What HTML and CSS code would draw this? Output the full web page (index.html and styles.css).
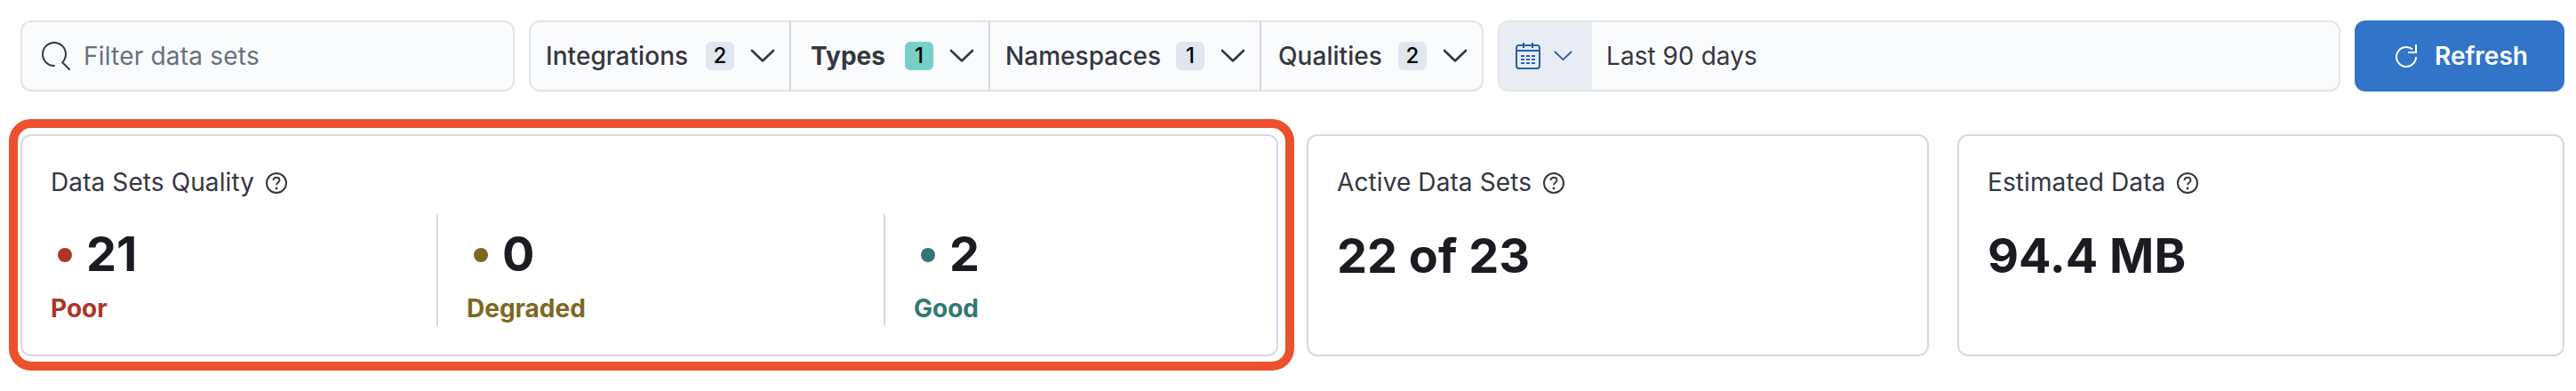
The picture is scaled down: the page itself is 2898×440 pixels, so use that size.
FILE: index.html
```html
<!DOCTYPE html>
<html lang="en">
<head>
<meta charset="utf-8">
<title>Data Set Quality</title>
<link rel="stylesheet" href="styles.css">
</head>
<body>
<svg class="sprite" aria-hidden="true">
  <symbol id="chevron" viewBox="0 0 28 16"><path d="M2 2l12 11.500L26 2" fill="none" stroke="currentColor" stroke-width="2.600" stroke-linecap="round" stroke-linejoin="round"/></symbol>
  <symbol id="help" viewBox="0 0 24 24"><circle cx="12" cy="12" r="11" fill="none" stroke="currentColor" stroke-width="2"/><path d="M8.500 9c.2-2.200 1.500-3.300 3.500-3.300s3.500 1.200 3.500 3c0 2.800-3.500 2.600-3.500 5.600" fill="none" stroke="currentColor" stroke-width="1.900"/><circle cx="12" cy="18" r="1.400" fill="currentColor"/></symbol>
</svg>
<main class="page">
  <div class="toolbar">
    <label class="search">
      <svg class="search-icon" viewBox="0 0 16 16"><path fill="currentColor" d="M11.271 11.978l3.872 3.873a.502.502 0 00.708 0 .502.502 0 000-.708l-3.565-3.564c2.380-2.747 2.267-6.923-.342-9.532-2.730-2.730-7.170-2.730-9.898 0-2.728 2.729-2.728 7.170 0 9.900a6.955 6.955 0 004.949 2.050.5.5 0 000-1 5.960 5.960 0 01-4.242-1.757 6.010 6.010 0 010-8.486 6.010 6.010 0 018.486 0 6.010 6.010 0 010 8.486.5.5 0 00.034.738z"/></svg>
      <span>Filter data sets</span>
    </label>
    <div class="filters">
      <div class="filter integrations"><span class="name">Integrations</span><span class="badge">2</span><svg class="chevron"><use href="#chevron"/></svg></div>
      <div class="filter types"><span class="name">Types</span><span class="badge active">1</span><svg class="chevron"><use href="#chevron"/></svg></div>
      <div class="filter namespaces"><span class="name">Namespaces</span><span class="badge">1</span><svg class="chevron"><use href="#chevron"/></svg></div>
      <div class="filter qualities"><span class="name">Qualities</span><span class="badge">2</span><svg class="chevron"><use href="#chevron"/></svg></div>
    </div>
    <div class="dates">
      <div class="quick">
        <svg class="calendar" viewBox="0 0 28 30"><g fill="none" stroke="currentColor" stroke-width="2"><rect x="1" y="3" width="26" height="26" rx="3"/><path d="M1 9h26M9 0v6M19 0v6"/><path d="M6 15h4M12 15h4M18 15h4M6 19h4M12 19h4M18 19h4M6 23h4M12 23h4M18 23h4"/></g></svg>
        <svg class="chevron small"><use href="#chevron"/></svg>
      </div>
      <span class="range">Last 90 days</span>
    </div>
    <button class="refresh" type="button">
      <svg class="refresh-icon" viewBox="0 0 24 26"><g fill="none" stroke="currentColor" stroke-width="2"><path d="M23 14A11 11 0 1 1 19 5.500"/><path d="M23 0v9h-9"/></g></svg>
      <span>Refresh</span>
    </button>
  </div>
  <div class="cards">
    <section class="card quality">
      <div class="title"><span>Data Sets Quality</span><svg class="help"><use href="#help"/></svg></div>
      <div class="stats">
        <div class="stat poor"><div class="count"><i class="dot"></i>21</div><div class="level">Poor</div></div>
        <div class="stat degraded"><div class="count"><i class="dot"></i>0</div><div class="level">Degraded</div></div>
        <div class="stat good"><div class="count"><i class="dot"></i>2</div><div class="level">Good</div></div>
      </div>
      <div class="highlight"></div>
    </section>
    <section class="card activity">
      <div class="title"><span>Active Data Sets</span><svg class="help"><use href="#help"/></svg></div>
      <div class="value">22 of 23</div>
    </section>
    <section class="card size">
      <div class="title"><span>Estimated Data</span><svg class="help"><use href="#help"/></svg></div>
      <div class="value">94.4 MB</div>
    </section>
  </div>
</main>
</body>
</html>
```
FILE: styles.css
```css
* { box-sizing: border-box; }

body {
  margin: 0;
  background: #fff;
  color: #343741;
  font: 400 28px/40px Inter, "Liberation Sans", sans-serif;
}

.sprite { display: none; }
svg { display: block; flex: none; }

.page {
  height: 440px;
  padding: 23px 13px 0 23px;
}

.toolbar {
  display: flex;
  gap: 16px;
  height: 80px;
}

.search, .filters, .dates {
  display: flex;
  align-items: center;
  background: #fafbfd;
  border: 2px solid #e3e4e8;
  border-radius: 12px;
}

.search {
  width: 556px;
  padding-left: 22px;
  gap: 15px;
  color: #69707d;
  letter-spacing: 0.2px;
}

.search-icon { width: 32px; height: 32px; color: #343741; }

.filters {
  width: 1074px;
  align-items: stretch;
}

.filter {
  display: flex;
  align-items: center;
  padding: 0 16px 0 17px;
  margin: -2px 0;
  font-weight: 500;
  letter-spacing: 0.05px;
  border-right: 2px solid #d5d7dc;
}

.filter .name { flex: 1; }
.integrations { width: 293px; }
.types { width: 224px; padding-left: 22px; font-weight: 700; }
.namespaces { width: 305px; }
.qualities { flex: 1; padding-left: 19px; border-right: 0; }

.badge {
  width: 32px;
  height: 32px;
  margin-right: 18px;
  border-radius: 6px;
  background: #e0e5ee;
  color: #000;
  font-size: 24px;
  font-weight: 500;
  line-height: 31px;
  text-align: center;
}

.badge.active { background: #75d0c7; }

.chevron { width: 28px; height: 16px; }

.dates { width: 948px; overflow: hidden; }

.quick {
  display: flex;
  align-items: center;
  gap: 15px;
  width: 104px;
  height: 100%;
  padding-left: 18px;
  background: #e9edf3;
  color: #2861a8;
}

.calendar { width: 28px; height: 30px; }
.chevron.small { width: 21px; height: 12px; }
.range { padding-left: 16px; letter-spacing: 0.05px; }

.refresh {
  display: flex;
  align-items: center;
  width: 236px;
  padding: 0 0 0 46px;
  gap: 20px;
  border: 0;
  border-radius: 12px;
  background: #3275c8;
  color: #fff;
  font: 600 28px/40px Inter, "Liberation Sans", sans-serif;
}

.refresh-icon { width: 24px; height: 26px; }

.cards {
  display: flex;
  gap: 32px;
  margin-top: 48px;
}

.card {
  position: relative;
  height: 250px;
  padding: 32px 32px 0;
  border: 2px solid #d3dae6;
  border-radius: 12px;
}

.quality { width: 1415px; padding-left: 32px; }
.activity { width: 700px; }
.size { width: 683px; }

.title {
  display: flex;
  align-items: center;
  gap: 13px;
  letter-spacing: 0.1px;
}

.help { width: 24px; height: 24px; margin-top: 2px; }

.value {
  margin-top: 31px;
  color: #1a1c21;
  font-size: 54px;
  font-weight: 700;
  line-height: 64px;
}

.stats {
  display: flex;
  height: 126px;
  margin-top: 16px;
}

.stat { padding: 13px 0 0 32px; }
.stat + .stat { border-left: 2px solid #d3dae6; }
.poor { width: 434px; padding-left: 0; color: #ae3529; }
.degraded { width: 503px; color: #7f6720; }
.good { color: #337870; }

.count {
  display: flex;
  align-items: center;
  color: #1a1c21;
  font-size: 54px;
  font-weight: 700;
  line-height: 64px;
}

.dot {
  width: 16px;
  height: 16px;
  margin: 2px 16px 0 8px;
  border-radius: 50%;
}

.poor .dot { background: #ae3529; }
.degraded .dot { background: #7f6720; }
.good .dot { background: #337870; }

.level {
  padding-top: 9px;
  font-weight: 700;
  line-height: 40px;
}

/* Callout frame drawn over the card edge */
.highlight {
  position: absolute;
  inset: -19px -20px -18px -15px;
  border: 10px solid #eb512d;
  border-radius: 25px;
}
```
